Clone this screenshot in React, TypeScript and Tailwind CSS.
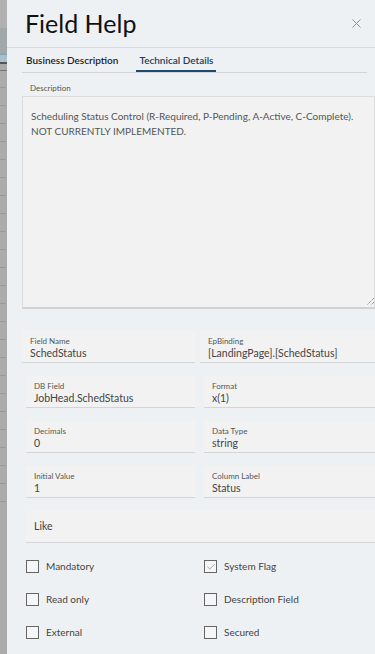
import { Check, X } from "lucide-react";

const fields = [
  [
    { label: "Field Name", value: "SchedStatus" },
    { label: "EpBinding", value: "[LandingPage].[SchedStatus]" },
  ],
  [
    { label: "DB Field", value: "JobHead.SchedStatus" },
    { label: "Format", value: "x(1)" },
  ],
  [
    { label: "Decimals", value: "0" },
    { label: "Data Type", value: "string" },
  ],
  [
    { label: "Initial Value", value: "1" },
    { label: "Column Label", value: "Status" },
  ],
];

const flags = [
  { label: "Mandatory", checked: false },
  { label: "System Flag", checked: true },
  { label: "Read only", checked: false },
  { label: "Description Field", checked: false },
  { label: "External", checked: false },
  { label: "Secured", checked: false },
];

const Field = ({ label, value }: { label: string; value: string }) => (
  <div className="h-[32px] border-b border-[#d3d5d7] bg-[#f2f2f2] px-[8px] pt-[5px]">
    <p className="text-[8px] leading-[10px] text-[#555]">{label}</p>
    <p className="text-[10.5px] leading-[14px] text-[#444]">{value}</p>
  </div>
);

const App = () => {
  return (
    <div className="flex h-[654px] w-[375px] overflow-hidden font-['Lato',sans-serif]">
      {/* app behind the panel */}
      <div className="flex w-[7px] shrink-0 flex-col bg-[#ababab]">
        <div className="h-[28px] bg-[#b1b1b1]" />
        <div className="h-[26px] bg-[#a0a8aa]" />
        <div className="h-[1px] bg-[#7fa3b5]" />
        <div className="h-[7px] bg-[#a8c0cc]" />
        <div className="h-[2px] bg-[#555]" />
        <div className="h-[6px] bg-[#aaa]" />
        <div className="h-[1px] bg-[#777]" />
        <div className="flex flex-col gap-[17px] pt-[16px]">
          {Array.from({ length: 24 }).map((_, i) => (
            <div key={i} className="h-[1px] w-[6px] bg-[#999]" />
          ))}
        </div>
      </div>

      <section className="flex-1 bg-[#eef1f4]">
        {/* Header */}
        <div className="flex h-[48px] items-center justify-between border-b border-[#d6dadd] pl-[18px] pr-[11px]">
          <h1 className="text-[25px] leading-none text-[#111]">Field Help</h1>
          <X className="h-[15px] w-[15px] text-[#8a8a8a]" strokeWidth={1.5} />
        </div>

        <div className="pl-[15px]">
          {/* Tabs */}
          <div className="mr-[8px] flex h-[25px] items-end gap-[18px] border-b border-[#d2d6da] pl-[4px]">
            <span className="pb-[5px] text-[10px] leading-[13px] font-semibold text-[#222]">Business Description</span>
            <span className="border-b-[2px] border-[#1c4a6e] px-[3px] pb-[3px] text-[10px] leading-[13px] font-semibold text-[#1c3e5a]">
              Technical Details
            </span>
          </div>

          <p className="mt-[9px] pl-[8px] text-[8px] leading-[12px] text-[#555]">Description</p>

          {/* Description box */}
          <div className="relative mt-[2px] h-[213px] border border-b-[2px] border-[#dcdcdc] border-b-[#d2d2d2] bg-[#f2f2f2] px-[8px] pt-[12px] text-[10px] leading-[15px] text-[#555]">
            <p>Scheduling Status Control (R-Required, P-Pending, A-Active, C-Complete).</p>
            <p>NOT CURRENTLY IMPLEMENTED.</p>
            <svg className="absolute bottom-[2px] right-[0px] h-[8px] w-[8px]" viewBox="0 0 8 8">
              <path d="M8 1 L1 8 M8 5 L5 8" stroke="#666" strokeWidth="1" strokeDasharray="1 1" />
            </svg>
          </div>

          {/* Fields */}
          <div className="mt-[22px] flex flex-col gap-[13px]">
            {fields.map((row, i) => (
              <div key={i} className={`grid grid-cols-[173px_1fr] gap-[5px] ${i === 0 ? "" : "pl-[4px] [&>*:first-child]:w-[169px]"}`}>
                {row.map((f) => (
                  <Field key={f.label} label={f.label} value={f.value} />
                ))}
              </div>
            ))}
            <div className="ml-[4px] flex h-[32px] items-center border-b border-[#d3d5d7] bg-[#f2f2f2] px-[8px]">
              <span className="text-[10.5px] text-[#444]">Like</span>
            </div>
          </div>

          {/* Flags */}
          <div className="mt-[17px] grid grid-cols-[178px_1fr] gap-y-[20px] pl-[4px]">
            {flags.map((f) => (
              <label key={f.label} className="flex h-[13px] items-center gap-[7px]">
                <span className="flex h-[13px] w-[13px] items-center justify-center border border-[#666] bg-[#f4f6f8]">
                  {f.checked && <Check className="h-[10px] w-[10px] text-[#777]" strokeWidth={1.5} />}
                </span>
                <span className="text-[10px] leading-[13px] text-[#444]">{f.label}</span>
              </label>
            ))}
          </div>
        </div>
      </section>
    </div>
  );
};

export default App;
